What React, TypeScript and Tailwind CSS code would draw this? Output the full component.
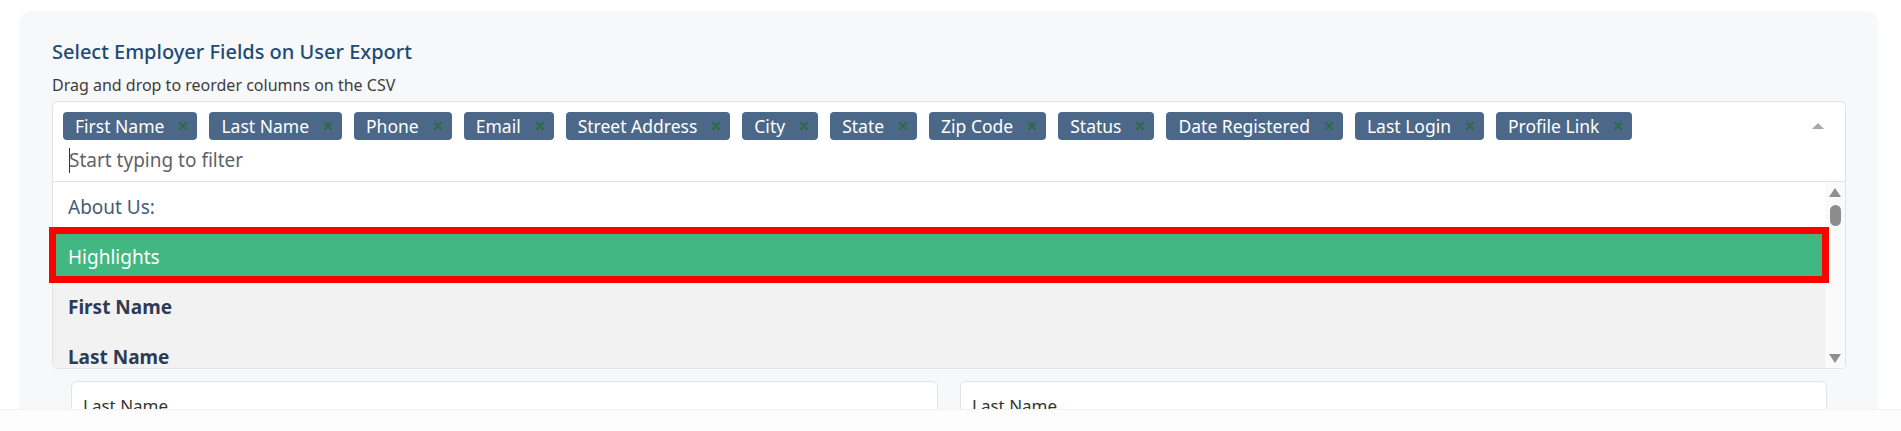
const tags = [
  'First Name',
  'Last Name',
  'Phone',
  'Email',
  'Street Address',
  'City',
  'State',
  'Zip Code',
  'Status',
  'Date Registered',
  'Last Login',
  'Profile Link',
]

function Tag({ label }: { label: string }) {
  return (
    <div className="flex h-[28px] items-center rounded-[4px] bg-[#4b6889] pl-[12px] pr-[10px] text-[17.5px] leading-[28px] text-white">
      <span>{label}</span>
      <svg className="ml-[15px]" width="8" height="8" viewBox="0 0 8 8">
        <path d="M1 1L7 7M7 1L1 7" stroke="#2d6a45" strokeWidth="2" strokeLinecap="round" />
      </svg>
    </div>
  )
}

function Scrollbar() {
  return (
    <div className="flex w-[20px] flex-col items-center bg-[#fafafa] pt-[6px]">
      <svg width="12" height="9" viewBox="0 0 12 9">
        <path d="M6 0L12 9H0Z" fill="#8f8f8f" />
      </svg>
      <div className="mt-[8px] h-[21px] w-[11px] rounded-full bg-[#8c8c8c]" />
      <div className="flex-1" />
      <svg className="mb-[5px]" width="12" height="9" viewBox="0 0 12 9">
        <path d="M0 0H12L6 9Z" fill="#8f8f8f" />
      </svg>
    </div>
  )
}

function FieldSelect() {
  return (
    <div className="mt-[5px] rounded-[5px] border border-[#e3e3e3] bg-white">
      {/* selected values + filter input */}
      <div className="flex items-start pl-[10px] pr-[21px] pt-[10px] pb-[7px]">
        <div className="flex-1">
          <div className="flex flex-wrap gap-x-[12px] gap-y-[6px]">
            {tags.map((t) => (
              <Tag key={t} label={t} />
            ))}
          </div>
          <div className="mt-[6px] flex h-[28px] items-center pl-[6px] text-[19px] leading-[28px] text-[#5f6368]">
            <span className="mr-[-1px] h-[25px] w-[1px] bg-[#333]" />
            <span>Start typing to filter</span>
          </div>
        </div>
        <svg className="mt-[11px]" width="12" height="6" viewBox="0 0 12 6">
          <path d="M6 0L12 6H0Z" fill="#a8a8a8" />
        </svg>
      </div>

      {/* options list, scrolled so the last row is only partly shown */}
      <div className="flex h-[187px] border-t border-[#e3e3e3]">
        <div className="flex-1 text-[19px] leading-[26px]">
          <div className="flex h-[50px] items-center pl-[15px] text-[#4a5b73]">About Us:</div>
          <div className="relative flex h-[50px] items-center bg-[#42b782] pl-[15px] text-white">
            Highlights
            <div className="pointer-events-none absolute -left-[4px] -right-[4px] -top-[5px] -bottom-[1px] border-[7px] border-[#ff0000]" />
          </div>
          <div className="flex h-[50px] items-center bg-[#f2f2f2] pl-[15px] font-bold text-[#2f3b52]">First Name</div>
          <div className="h-[36px] bg-[#f2f2f2] pl-[15px] pt-[12px] font-bold text-[#2f3b52]">Last Name</div>
        </div>
        <Scrollbar />
      </div>
    </div>
  )
}

export default function App() {
  return (
    <div className="h-[431px] overflow-hidden bg-white" style={{ fontFamily: '"Noto Sans", sans-serif' }}>
      <div className="h-[409px] overflow-hidden pl-[19px] pr-[23px] pt-[11px]">
        <div className="h-[420px] rounded-[12px] bg-[#f7f8fa] pl-[33px] pr-[32px] pt-[27px]">
          <h2 className="text-[20px] font-medium leading-[28px] text-[#1f4b73]">
            Select Employer Fields on User Export
          </h2>
          <p className="mt-[8px] text-[16px] leading-[22px] text-[#3d3d3d]">
            Drag and drop to reorder columns on the CSV
          </p>
          <FieldSelect />
          <div className="mt-[12px] grid grid-cols-2 gap-[22px] px-[19px]">
            <div className="h-[60px] rounded-[6px] border border-[#e3e3e3] bg-white pl-[11px] pt-[10px] text-[17px] leading-[28px] text-[#333]">
              Last Name
            </div>
            <div className="h-[60px] rounded-[6px] border border-[#e3e3e3] bg-white pl-[11px] pt-[10px] text-[17px] leading-[28px] text-[#333]">
              Last Name
            </div>
          </div>
        </div>
      </div>
      <div className="h-[22px] border-t border-[#f2f2f2] bg-[#fdfdfd]" />
    </div>
  )
}
